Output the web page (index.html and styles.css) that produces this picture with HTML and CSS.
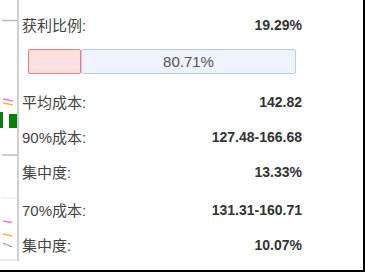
FILE: index.html
```html
<!DOCTYPE html>
<html>
<head>
<meta charset="utf-8">
<link rel="stylesheet" href="styles.css">
</head>
<body>
<div class="frame">
  <div class="strip">
    <svg width="20" height="262" viewBox="0 0 20 262">
      <line x1="2" y1="20.5" x2="17" y2="20.5" stroke="#bbb" stroke-width="1.5"/>
      <line x1="3" y1="99" x2="13" y2="101" stroke="#f46ef4" stroke-width="1.5"/>
      <line x1="3" y1="103" x2="13" y2="105" stroke="#f5b942" stroke-width="1.5"/>
      <rect x="0" y="112" width="3" height="16" fill="#068106"/>
      <rect x="9" y="114" width="8" height="14" fill="#068106"/>
      <line x1="2" y1="155" x2="17" y2="155" stroke="#aaa" stroke-width="1.2"/>
      <line x1="2" y1="198" x2="17" y2="198" stroke="#e6e6e6" stroke-width="1"/>
      <line x1="3" y1="221" x2="12" y2="222.5" stroke="#f46ef4" stroke-width="1.5"/>
      <line x1="3" y1="234" x2="12" y2="236" stroke="#f5b942" stroke-width="1.5"/>
      <line x1="3" y1="243" x2="12" y2="247" stroke="#999" stroke-width="1.2"/>
      <line x1="0" y1="260" x2="18" y2="260" stroke="#ddd" stroke-width="1"/>
      <rect x="17" y="0" width="2" height="261" fill="#cfcfcf"/>
    </svg>
  </div>
  <div class="panel">
    <div class="row"><span class="label">获利比例:</span><span class="value">19.29%</span></div>
    <div class="bar">
      <div class="bar-win" style="width:53px"></div>
      <div class="bar-lose">80.71%</div>
    </div>
    <div class="group first">
      <div class="row"><span class="label">平均成本:</span><span class="value">142.82</span></div>
      <div class="row"><span class="label">90%成本:</span><span class="value">127.48-166.68</span></div>
      <div class="row"><span class="label">集中度:</span><span class="value">13.33%</span></div>
    </div>
    <div class="group second">
      <div class="row"><span class="label">70%成本:</span><span class="value">131.31-160.71</span></div>
      <div class="row"><span class="label">集中度:</span><span class="value">10.07%</span></div>
    </div>
  </div>
</div>
</body>
</html>
```

FILE: styles.css
```css
html, body {
  margin: 0;
  padding: 0;
  background: #fff;
}
.frame {
  width: 365px;
  height: 272px;
  box-sizing: border-box;
  border-right: 2px solid #000;
  border-bottom: 2px solid #000;
  display: flex;
  font-family: "Liberation Sans", "Noto Sans CJK SC", sans-serif;
  color: #333;
}
.strip {
  width: 20px;
  flex: none;
}
.strip svg {
  display: block;
}
.panel {
  width: 282px;
  padding: 7px 0 0 2px;
  box-sizing: border-box;
  display: flex;
  flex-direction: column;
}
.row {
  height: 35px;
  display: flex;
  align-items: center;
  justify-content: space-between;
}
.label {
  font-size: 15px;
  color: #444;
}
.value {
  font-size: 14px;
  font-weight: bold;
  color: #333;
}
.bar {
  margin: 7px 6px 0 6px;
  height: 25px;
  display: flex;
}
.bar-win {
  box-sizing: border-box;
  background: #fde0e0;
  border: 1px solid #f47c7c;
  border-radius: 2px;
  flex: none;
}
.bar-lose {
  flex: 1;
  box-sizing: border-box;
  background: #eef3fe;
  border: 1px solid #b9cdf4;
  border-radius: 2px;
  display: flex;
  align-items: center;
  justify-content: center;
  font-size: 15px;
  color: #555;
}
.group.first {
  margin-top: 10px;
}
.group.second {
  margin-top: 3px;
}
```
